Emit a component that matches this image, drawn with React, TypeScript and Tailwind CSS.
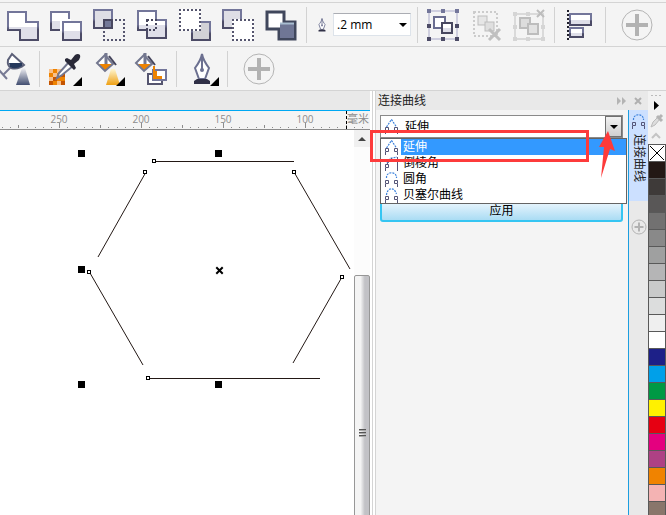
import { useState } from 'react'
import type { ReactNode } from 'react'

const EDGE = 'url(#edge)'
const BODY = 'url(#body)'

const swatches = [
  '#231815', '#3e3a39', '#595757', '#727171', '#898989', '#9fa0a0', '#b5b5b6',
  '#c9caca', '#dcdddd', '#efefef', '#ffffff', '#1d2088', '#00a0e9', '#009944',
  '#fff100', '#e60012', '#e4007f', '#ae4184', '#f08300', '#f4b3b3', '#89766b'
]

const curveTypes = [
  { id: 'extend', name: '延伸' },
  { id: 'chamfer', name: '倒棱角' },
  { id: 'round', name: '圆角' },
  { id: 'bezier', name: '贝塞尔曲线' }
]

const curvePaths: Record<string, string> = {
  extend: 'M2.5 8L7.5 0.5L12.5 8',
  chamfer: 'M3 7L6 2.5L13 1',
  round: 'M2.5 6C2 -1 13 -1 12.5 6',
  bezier: 'M2.5 7C3 0 10 -2 12.5 6'
}

const CurveIcon = ({ type }: { type: string }) => (
  <svg viewBox="0 0 15 15" className="h-[15px] w-[15px] shrink-0" fill="none">
    <path d={curvePaths[type]} stroke="#3c82dc" strokeWidth="1.2" strokeDasharray="2 1" />
    {type === 'chamfer' ? (
      <path d="M13.5 1V15M3 8L8 2" stroke="#555577" />
    ) : (
      <path d="M10.5 8.5h3v3h-3zM13.5 12V15" stroke="#555577" />
    )}
    <path d="M1.5 8.5h3v3h-3zM1.5 12V15" stroke="#555577" />
  </svg>
)

const Tool = ({ label, children, disabled }: { label: string; children: ReactNode; disabled?: boolean }) => (
  <button type="button" aria-label={label} disabled={disabled} className="block h-8 w-8 shrink-0">
    <svg viewBox="0 0 32 32" className="h-8 w-8 overflow-visible" fill="none">
      {children}
    </svg>
  </button>
)

const Separator = () => <div className="mx-[9px] h-9 w-px shrink-0 bg-[#d2d2d2]" />

const Flyout = () => <path d="M33 24V33H24Z" fill="#000" />

const PlusCircle = () => (
  <>
    <circle cx="16" cy="16" r="15" stroke="#b4b4b4" />
    <path d="M16 5V27M5 16H27" stroke="#b2b2b2" strokeWidth="4" />
  </>
)

const Dotted = ({ x, y }: { x: number; y: number }) => (
  <rect x={x + 1} y={y + 1} width="20" height="20" stroke="#56566f" strokeWidth="2" strokeDasharray="2 2" strokeDashoffset="1" />
)

const Bucket = () => (
  <>
    <path d="M1 10L9 2L17 11L9 18Z" fill="#fff" />
    <path d="M3 11H16L9 18Z" fill="#ee8300" />
    <path d="M1 10L9 2L17 11L9 18Z" stroke="#73778f" strokeWidth="2" />
    <path d="M10 0V11" stroke="#73778f" strokeWidth="3" />
    <path d="M13 3L20 12" stroke="#45455c" strokeWidth="2" />
  </>
)

const Nib = () => (
  <>
    <path d="M16 1C17 7 20 11 23 15L19 26H13L9 15C12 11 15 7 16 1Z" fill="#fff" stroke="#6c7090" strokeWidth="2" />
    <path d="M16 3V16" stroke="#6c7090" strokeWidth="2" />
    <circle cx="16" cy="17" r="2" fill="#6c7090" />
    <path d="M11 26H21L24 28V31H8V28Z" fill="#303047" />
  </>
)

const Gradients = () => (
  <svg className="absolute h-0 w-0" aria-hidden="true">
    <defs>
      <linearGradient id="edge" x1="0" y1="0" x2="0" y2="1">
        <stop offset="0.5" stopColor="#73769a" />
        <stop offset="0.65" stopColor="#4c4b66" />
      </linearGradient>
      <linearGradient id="body" x1="0" y1="0" x2="0" y2="1">
        <stop offset="0.52" stopColor="#fff" />
        <stop offset="0.52" stopColor="#dfdfe9" />
      </linearGradient>
      <linearGradient id="spray" x1="0" y1="0" x2="0" y2="1">
        <stop offset="0" stopColor="#f0f0f4" />
        <stop offset="1" stopColor="#414d70" />
      </linearGradient>
      <linearGradient id="glow" x1="0" y1="0" x2="0" y2="1">
        <stop offset="0" stopColor="#fff6cf" />
        <stop offset="1" stopColor="#eea014" />
      </linearGradient>
    </defs>
  </svg>
)

const ShapeToolbar = () => (
  <div className="flex h-[45px] items-center border-t border-b border-[#d4d4d4] pl-[7px]">
    <div className="flex gap-[11px]">
      <Tool label="Weld">
        <path d="M1 3H19V13H31V31H13V21H1Z" fill={BODY} stroke={EDGE} strokeWidth="2" />
      </Tool>
      <Tool label="Trim">
        <rect x="1" y="3" width="18" height="18" fill={BODY} stroke={EDGE} strokeWidth="2" />
        <path d="M11 22V11H21" stroke="#fff" strokeWidth="2" />
        <rect x="13" y="13" width="18" height="18" fill={BODY} stroke={EDGE} strokeWidth="2" />
      </Tool>
      <Tool label="Intersect">
        <rect x="1" y="1" width="18" height="18" fill="#dedee5" stroke={EDGE} strokeWidth="2" />
        <Dotted x={10} y={10} />
        <rect x="11" y="11" width="8" height="8" fill="#747998" stroke="#48475f" strokeWidth="2" />
      </Tool>
      <Tool label="Simplify">
        <path d="M2 2H20V11H30V29H11V21H2Z" fill={BODY} stroke={EDGE} strokeWidth="2" />
        <rect x="11" y="11" width="9" height="10" stroke="#48475f" strokeWidth="2" strokeDasharray="2 2" />
      </Tool>
      <Tool label="Front minus back">
        <rect x="13" y="13" width="18" height="18" fill="#d2d2d7" stroke={EDGE} strokeWidth="2" />
        <rect width="22" height="22" fill="#fff" />
        <Dotted x={0} y={0} />
      </Tool>
      <Tool label="Back minus front">
        <rect x="1" y="1" width="18" height="18" fill="#dedee5" stroke={EDGE} strokeWidth="2" />
        <rect x="10" y="10" width="22" height="22" fill="#fff" />
        <Dotted x={10} y={10} />
      </Tool>
      <Tool label="Boundary">
        <path d="M2 3H19V13H30V30H14V20H2Z" fill="#fff" stroke="#40475c" strokeWidth="3" />
        <rect x="15" y="14" width="14" height="15" fill="#6f7695" />
        <path d="M15 14.5H29" stroke="#a8bdd0" strokeWidth="2" />
      </Tool>
    </div>
    <Separator />
    <div className="-mr-[3px] flex items-center">
      <label htmlFor="outline-width" className="w-[17px]" aria-label="Outline width">
        <svg viewBox="8 0 16 32" className="h-[14px] w-3" fill="none">
          <Nib />
        </svg>
      </label>
      <div className="relative">
        <select
          id="outline-width"
          className="block h-[23px] w-[78px] appearance-none border border-[#dde3ea] border-t-[#abadb3] bg-white pl-[3px] font-['Open_Sans','Noto_Sans',sans-serif] text-[12px] leading-5 text-black"
        >
          <option>.2 mm</option>
          <option>.5 mm</option>
        </select>
        <svg viewBox="0 0 8 4" className="pointer-events-none absolute top-[10px] right-1 h-1 w-2">
          <path d="M0 0H8L4 4Z" />
        </svg>
      </div>
    </div>
    <Separator />
    <div className="flex gap-[11px]">
      <Tool label="Group">
        <rect x="2" y="2" width="28" height="28" stroke="#cfcfdf" strokeWidth="2" />
        <rect x="7" y="8" width="11" height="11" fill="#fff" stroke="#6a6d90" strokeWidth="2" />
        <rect x="15" y="14" width="10" height="10" fill={BODY} stroke="#48475f" strokeWidth="2" />
        <path d="M0 0h4v4h-4zM14 0h4v4h-4zM28 0h4v4h-4z" fill="#73769a" />
        <path d="M0 15h4v4h-4zM28 15h4v4h-4zM0 28h4v4h-4zM14 28h4v4h-4zM28 28h4v4h-4z" fill="#4c4b66" />
      </Tool>
      <Tool label="Ungroup" disabled>
        <rect x="4" y="3" width="23" height="24" stroke="#cccccc" strokeWidth="2" strokeDasharray="2 2" />
        <rect x="8" y="7" width="9" height="9" fill="#e6e6e6" stroke="#bdbdbd" strokeWidth="1" />
        <rect x="15" y="13" width="9" height="9" fill="#dfdfdf" stroke="#bdbdbd" strokeWidth="1" />
        <path d="M19 20L30 31M30 20L19 31" stroke="#c0c0c0" strokeWidth="3" />
      </Tool>
      <Tool label="Ungroup all" disabled>
        <rect x="2" y="5" width="28" height="25" stroke="#dadada" strokeWidth="2" />
        <path d="M0 3h4v4h-4zM13 3h4v4h-4zM0 16h4v4h-4zM28 16h4v4h-4zM0 28h4v4h-4zM13 28h4v4h-4zM28 28h4v4h-4z" fill="#d5d5d5" />
        <rect x="7" y="9" width="10" height="10" fill="#dddddd" stroke="#bdbdbd" strokeWidth="2" />
        <rect x="15" y="15" width="10" height="10" fill="#e2e2e2" stroke="#bdbdbd" strokeWidth="2" />
        <path d="M24 1L31 8M31 1L24 8" stroke="#bdbdbd" strokeWidth="2" />
      </Tool>
    </div>
    <Separator />
    <Tool label="Align left">
      <path d="M4 1V31" stroke="#20202c" strokeWidth="2" strokeDasharray="2 2" />
      <rect x="6" y="5" width="21" height="11" fill={BODY} stroke={EDGE} strokeWidth="2" />
      <rect x="6" y="19" width="13" height="9" fill={BODY} stroke={EDGE} strokeWidth="2" />
    </Tool>
    <Separator />
    <div className="ml-[6px]">
      <Tool label="Customize">
        <PlusCircle />
      </Tool>
    </div>
  </div>
)

const FillToolbar = () => (
  <div className="flex h-[44px] items-center border-b border-[#d4d4d4]">
    <div className="-ml-[2px]">
      <Tool label="Transparency">
        <path d="M24 15H27L32 32H18Z" fill="url(#spray)" />
        <path d="M14 1L10 7Q9 13 13 15Q20 17 26 12Z" fill="#fff" stroke="#5c6078" strokeWidth="2" />
        <path d="M11 10H24L24 13Q17 17 12 14Z" fill="#26395c" />
        <path d="M12 15L6 21M1 17L9 26" stroke="#777a94" strokeWidth="2" />
      </Tool>
    </div>
    <Separator />
    <div className="flex gap-[11px]">
      <Tool label="Color eyedropper">
        <rect y="16" width="16" height="16" fill="#ee8300" />
        <path d="M0 16h4v4H0zM8 16h4v4H8zM4 20h4v4H4zM0 24h4v4H0zM8 28h4v4H8z" fill="#f8c08a" />
        <path d="M12 20h4v4h-4zM0 28h4v4H0zM12 28h4v4h-4zM4 24h4v4H4z" fill="#c45400" />
        <path d="M8 25L10 20L20 9L24 13L13 22Z" fill="#fff" stroke="#73778f" strokeWidth="2" />
        <path d="M16 6L18 5L22 7L26 2Q29 0 31 2Q32 4 30 7L25 11L27 15L25 17L16 8Z" fill="#292938" />
        <Flyout />
      </Tool>
      <Tool label="Interactive fill">
        <path d="M19 16H23L28 32H14Z" fill="url(#glow)" />
        <g transform="translate(4 0)">
          <Bucket />
        </g>
        <Flyout />
      </Tool>
      <Tool label="Smart fill">
        <rect x="13" y="21" width="14" height="10" fill="#fff" stroke="#55556f" strokeWidth="2" />
        <rect x="18" y="17" width="13" height="10" fill="#fff" stroke="#73769a" strokeWidth="2" />
        <Bucket />
        <path d="M18 13H20V18H22V23H27V26H18Z" fill="#ee8300" />
      </Tool>
    </div>
    <Separator />
    <Tool label="Outline pen">
      <Nib />
      <Flyout />
    </Tool>
    <Separator />
    <div className="ml-[6px]">
      <Tool label="Customize">
        <PlusCircle />
      </Tool>
    </div>
  </div>
)

const Ruler = () => {
  const ticks = Array.from({ length: 45 }, (_, i) => i)

  return (
    <div className="relative h-5 overflow-hidden border-t border-b border-t-[#00a8f3] border-b-[#8c8c8c] bg-[#f4f4f4]">
      <svg className="absolute bottom-0 left-0 h-[6px] w-full" shapeRendering="crispEdges">
        {ticks.map((i) => {
          const height = i % 10 === 7 ? 6 : i % 5 === 2 ? 3 : 1
          return <rect key={i} x={Math.round(2 + i * 8.18)} y={5 - height} width="1" height={height} fill="#8c8c8c" />
        })}
      </svg>
      <div className="flex pl-[18px] font-['Open_Sans','Noto_Sans',sans-serif] text-[10px] leading-4 text-[#8c8c8c]">
        {[250, 200, 150, 100].map((value) => (
          <span key={value} className="w-[82px] shrink-0 text-center">{value}</span>
        ))}
      </div>
      <div className="absolute top-0 right-px bottom-0 border-l border-dashed border-black text-[11px] leading-4 text-[#8c8c8c]">
        毫米
      </div>
    </div>
  )
}

const handles = [[78, 20], [215, 20], [78, 136], [78, 251], [215, 251]]
const nodes = [[152, 29], [143, 40], [292, 40], [87, 140], [340, 145], [146, 246]]

const Canvas = () => (
  <svg className="min-h-0 min-w-0 flex-1" fill="none">
    <path
      d="M155 31.5H294M146 42L98 127M294 42L350 139M90 143L143 235M342 147L293 233M148 248.5H320"
      stroke="#231815"
    />
    {nodes.map(([x, y]) => (
      <rect key={`${x}-${y}`} x={x + 0.5} y={y + 0.5} width="3" height="3" fill="#fff" stroke="#000" />
    ))}
    {handles.map(([x, y]) => (
      <rect key={`${x}-${y}`} x={x} y={y} width="7" height="7" fill="#000" />
    ))}
    <path d="M217 138L222 143M222 138L217 143" stroke="#000" strokeWidth="2" strokeLinecap="square" />
  </svg>
)

const Scrollbar = () => (
  <div className="flex w-4 flex-col overflow-hidden bg-[#fcfcfc]">
    <button type="button" aria-label="Scroll up" className="flex h-[17px] shrink-0 items-center justify-center bg-[#f0f0f0]">
      <svg viewBox="0 0 8 4" className="h-1 w-2">
        <path d="M0 4H8L4 0Z" fill="#444" />
      </svg>
    </button>
    <div className="mt-[128px] flex h-[316px] shrink-0 flex-col items-center justify-center gap-px rounded-xs border border-[#979797] bg-linear-to-r from-[#f4f4f4] from-40% to-[#c2c2c6] to-70%">
      <span className="h-0.5 w-[7px] border-t border-[#555] bg-[#aaa]" />
      <span className="h-0.5 w-[7px] border-t border-[#555] bg-[#aaa]" />
      <span className="h-0.5 w-[7px] border-t border-[#555] bg-[#aaa]" />
    </div>
  </div>
)

const JoinCurvesPanel = () => {
  const [selected, setSelected] = useState('extend')

  return (
    <div className="min-w-0 flex-1 pt-[5px] pr-[5px] pl-1">
      <div className="relative">
        <div className="flex h-[23px] items-center border border-[#8a8a8a] bg-white pl-[3px]">
          <CurveIcon type={selected} />
          <select
            aria-label="连接曲线"
            value={selected}
            onChange={(e) => setSelected(e.target.value)}
            className="ml-[6px] min-w-0 flex-1 appearance-none bg-white text-[12px] leading-5 text-black"
          >
            {curveTypes.map((type) => (
              <option key={type.id} value={type.id}>{type.name}</option>
            ))}
          </select>
          <button
            type="button"
            aria-label="Toggle list"
            className="flex h-full w-[17px] items-center justify-center border border-[#707070] bg-linear-to-b from-[#f2f2f2] to-[#cfcfcf]"
          >
            <svg viewBox="0 0 8 4" className="h-1 w-2">
              <path d="M0 0H8L4 4Z" />
            </svg>
          </button>
        </div>

        <ul role="listbox" aria-label="连接曲线" className="absolute top-full -right-1 left-0 border border-[#646464] bg-white">
          {curveTypes.map((type) => (
            <li
              key={type.id}
              role="option"
              aria-selected={type.id === selected}
              onClick={() => setSelected(type.id)}
              className="flex h-4 items-center pl-[3px]"
            >
              <CurveIcon type={type.id} />
              <span
                className={`ml-0.5 h-full flex-1 pl-0.5 text-[12px] leading-4 ${type.id === selected ? 'bg-[#3399ff] text-white' : 'text-black'
                  }`}
              >
                {type.name}
              </span>
            </li>
          ))}
        </ul>

        {/* Callouts */}
        <div className="pointer-events-none absolute top-[15px] -left-[10px] z-10 h-8 w-[219px] border-3 border-[#fd3b3b]" />
        <svg viewBox="0 0 16 48" className="pointer-events-none absolute top-4 right-2 z-10 h-12 w-4">
          <path d="M9 0L16 20L11 18L2 47L5 16L0 16Z" fill="#fd3b3b" />
        </svg>
      </div>

      <button
        type="button"
        className="mt-[62px] h-[22px] w-full rounded-[3px] border-2 border-[#35c5f2] bg-linear-to-b from-[#eaf6fd] to-[#aadcf4] text-[12px] leading-4 text-black"
      >
        应用
      </button>
    </div>
  )
}

const DockerTabs = () => (
  <div className="flex w-5 shrink-0 flex-col items-center border-l border-[#1b9ee0] bg-[#e9e9e9]">
    <button type="button" className="flex h-[91px] w-full flex-col items-center gap-[5px] bg-[#cce0ff] pt-1 text-[12px] leading-4 text-[#222]">
      <CurveIcon type="round" />
      <span className="[text-orientation:sideways] [writing-mode:vertical-rl]">连接曲线</span>
    </button>
    <button type="button" aria-label="Add docker" className="mt-[18px] h-4 w-4">
      <svg viewBox="0 0 32 32" className="h-4 w-4" fill="none">
        <circle cx="16" cy="16" r="14" stroke="#b4b4b4" strokeWidth="2" />
        <path d="M16 7V25M7 16H25" stroke="#b2b2b2" strokeWidth="4" />
      </svg>
    </button>
  </div>
)

const Palette = () => (
  <div className="flex w-[18px] shrink-0 flex-col overflow-hidden bg-[#f2f2f2]">
    <svg viewBox="0 0 18 53" className="h-[53px] w-[18px] shrink-0" fill="none">
      <path d="M3 4.5H14" stroke="#bbb" strokeWidth="1" strokeDasharray="2 2" />
      <path d="M6 10V19L11 14.5Z" fill="#000" />
      <path d="M3 36L5 31L10 26L12 28L7 34Z" fill="#ddd" stroke="#bbb" />
      <path d="M9 25L14 30M11 27L14 24" stroke="#b4b4b4" strokeWidth="3" />
      <path d="M4 47L8 43L12 47" stroke="#c4c4c4" strokeWidth="2" />
    </svg>
    <div className="flex flex-col gap-px bg-[#595959] p-px">
      <button type="button" aria-label="No color" className="h-4 shrink-0 bg-white">
        <svg viewBox="0 0 16 16" className="h-4 w-4">
          <path d="M1 1L15 15M15 1L1 15" stroke="#000" />
        </svg>
      </button>
      {swatches.map((color) => (
        <button key={color} type="button" aria-label={color} className="h-4 shrink-0" style={{ backgroundColor: color }} />
      ))}
    </div>
  </div>
)

const App = () => {
  return (
    <div className="flex h-screen flex-col overflow-hidden bg-[#f4f4f4] pt-0.5 font-['Liberation_Sans','Noto_Sans_CJK_SC',sans-serif]">
      <Gradients />
      <ShapeToolbar />
      <FillToolbar />

      <div className="flex min-h-0 flex-1">
        {/* Drawing window */}
        <div className="flex min-w-0 flex-1 flex-col">
          <div className="h-[19px] shrink-0 bg-[#e9e9e9]" />
          <Ruler />
          <div className="flex min-h-0 flex-1 bg-white">
            <Canvas />
            <Scrollbar />
          </div>
        </div>
        <div className="w-[6px] shrink-0 border-r border-[#d4d4d4] bg-white">
          <div className="h-full w-[3px] border-r border-[#d4d4d4]" />
        </div>

        {/* Docker */}
        <div className="flex w-[272px] shrink-0 flex-col">
          <div className="flex h-[19px] shrink-0 items-center bg-[#e9e9e9] pr-[6px] pl-0.5 text-[12px] leading-4 text-[#222]">
            <h2 className="flex-1">连接曲线</h2>
            <button type="button" aria-label="Collapse" className="mr-2">
              <svg viewBox="0 0 9 8" className="h-2 w-[9px]" fill="#b4b4b4">
                <path d="M0 0L4 4L0 8ZM5 0L9 4L5 8Z" />
              </svg>
            </button>
            <button type="button" aria-label="Close">
              <svg viewBox="0 0 8 8" className="h-2 w-2">
                <path d="M1 1L7 7M7 1L1 7" stroke="#b0b0b0" strokeWidth="2" />
              </svg>
            </button>
          </div>
          <div className="flex min-h-0 flex-1">
            <JoinCurvesPanel />
            <DockerTabs />
          </div>
        </div>

        <Palette />
      </div>
    </div>
  )
}

export default App
